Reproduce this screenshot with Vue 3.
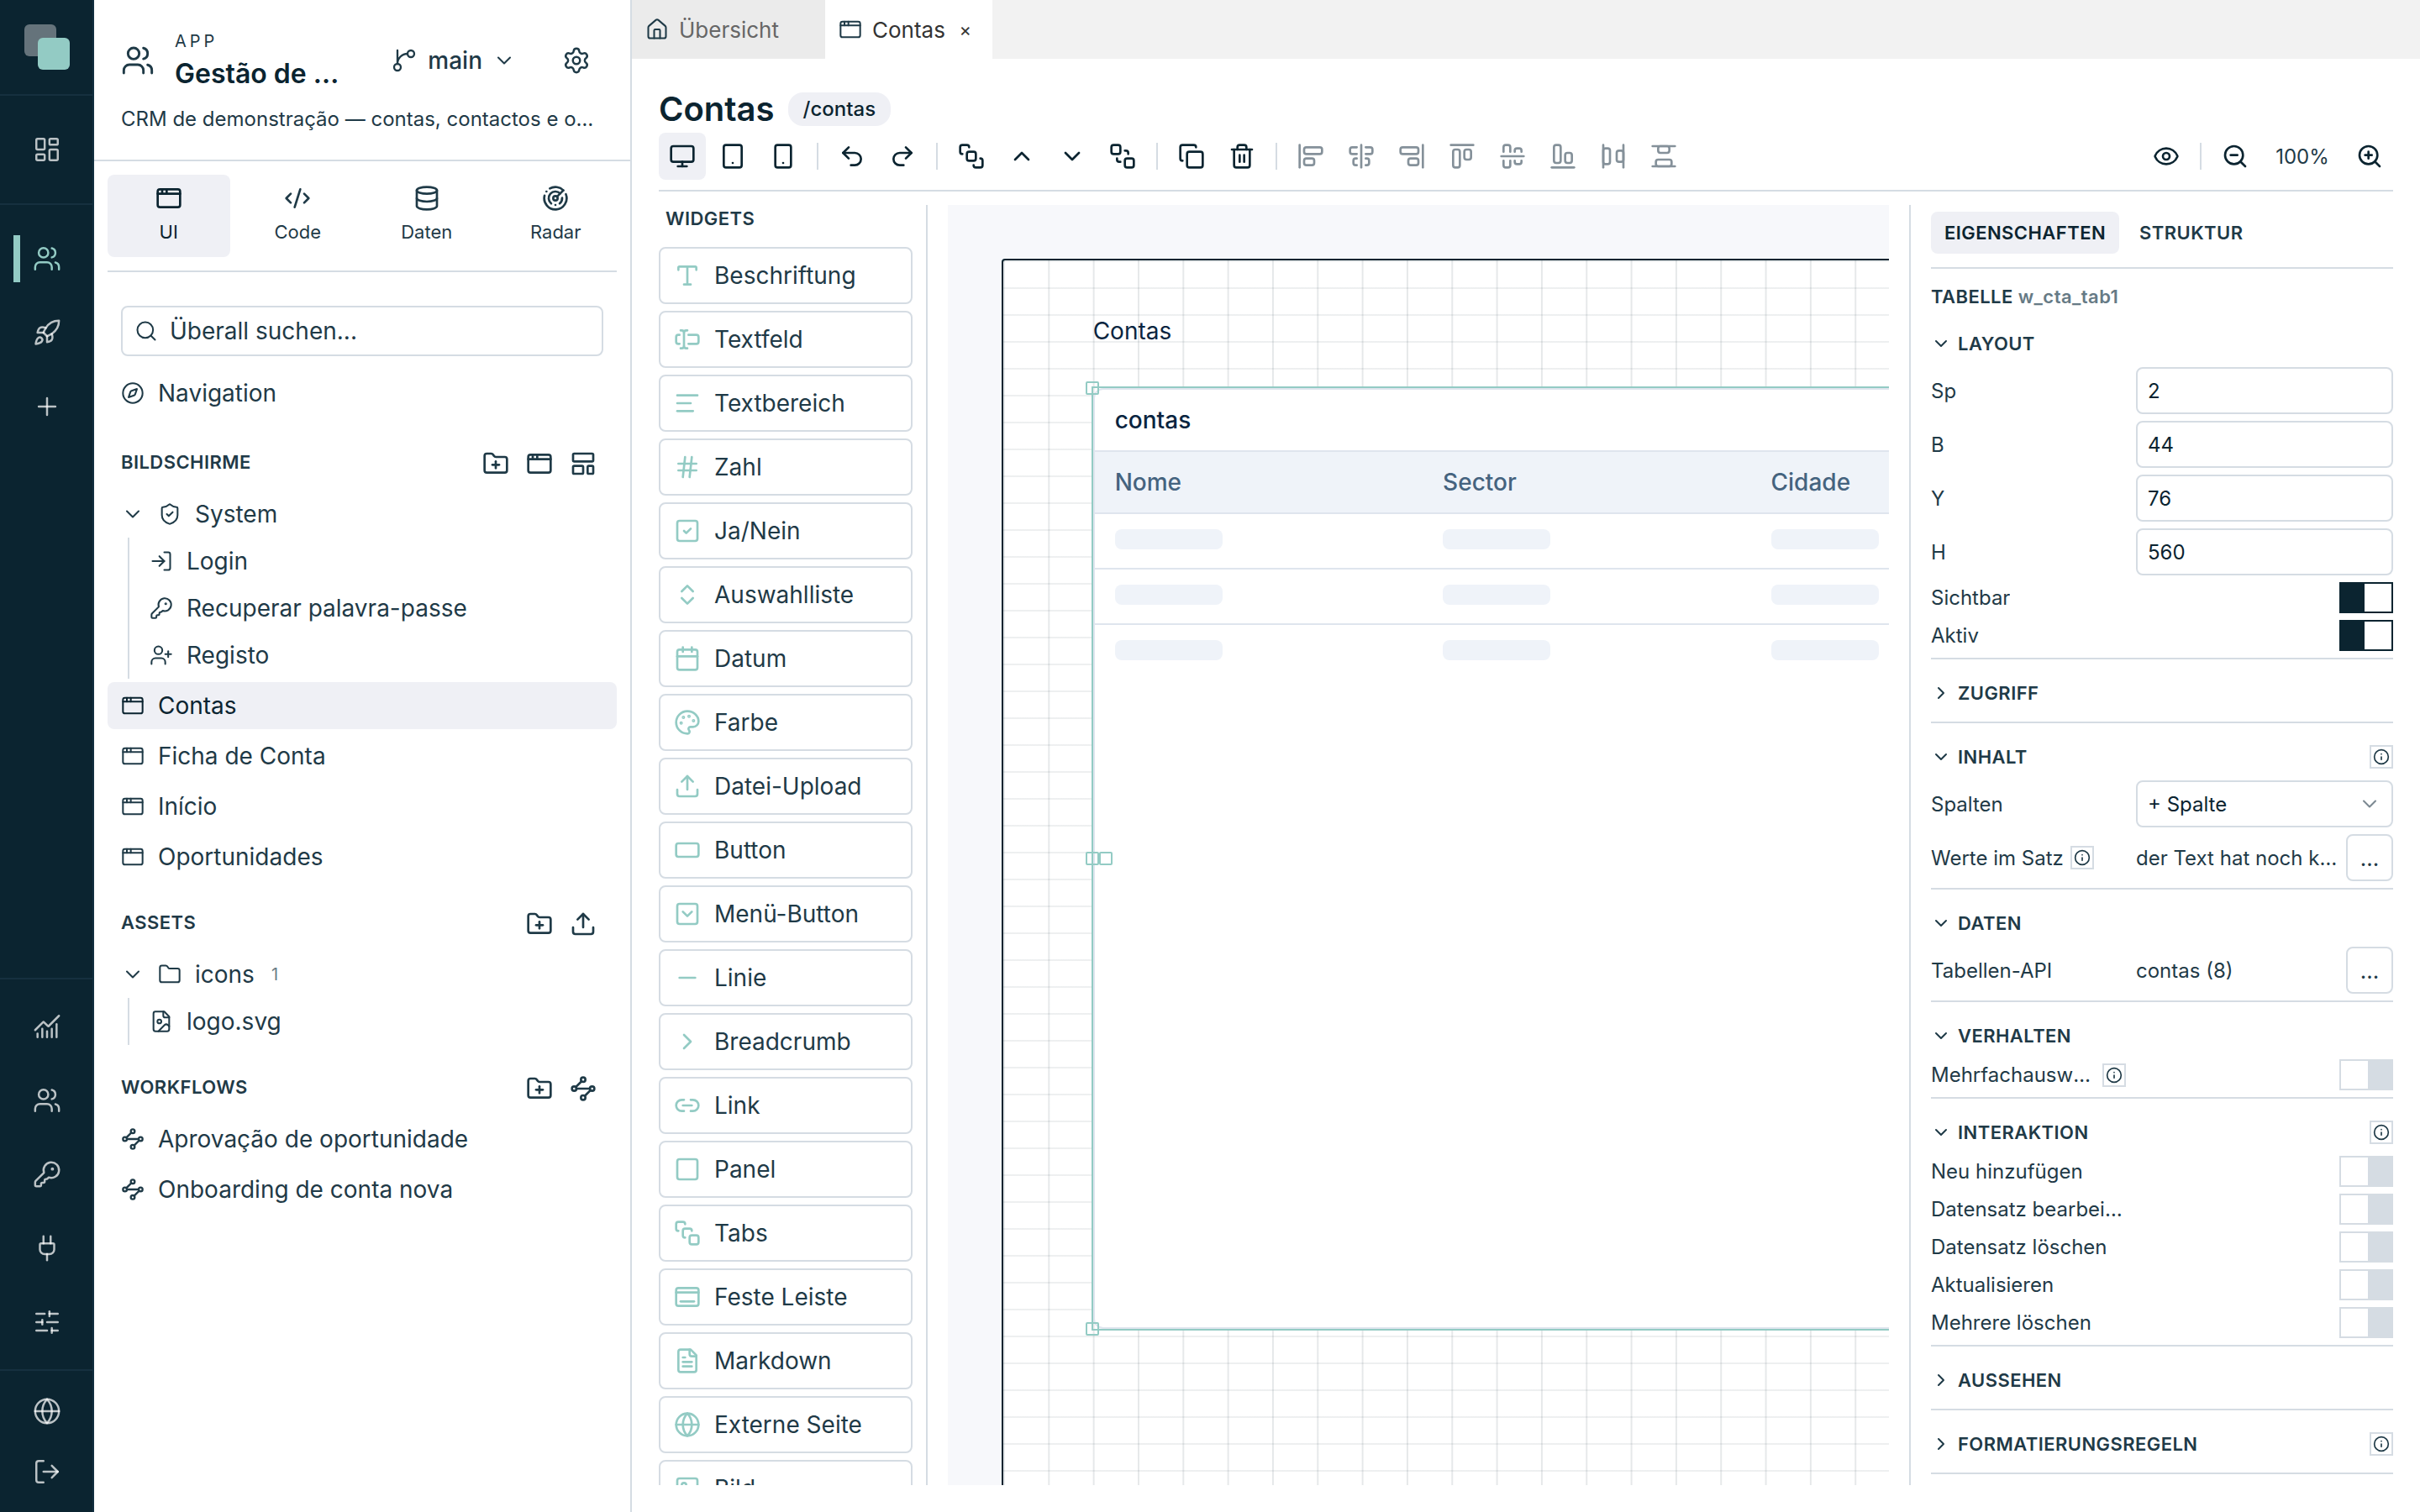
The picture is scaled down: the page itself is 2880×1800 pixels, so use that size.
<script setup>
import { h, ref } from 'vue';

const icons = {
  dashboard: '<rect width="7" height="9" x="3" y="3" rx="1"/><rect width="7" height="5" x="14" y="3" rx="1"/><rect width="7" height="9" x="14" y="12" rx="1"/><rect width="7" height="5" x="3" y="16" rx="1"/>',
  users: '<path d="M16 21v-2a4 4 0 0 0-4-4H6a4 4 0 0 0-4 4v2"/><circle cx="9" cy="7" r="4"/><path d="M22 21v-2a4 4 0 0 0-3-3.87"/><path d="M16 3.13a4 4 0 0 1 0 7.75"/>',
  rocket: '<path d="M4.5 16.5c-1.5 1.26-2 5-2 5s3.74-.5 5-2c.71-.84.7-2.13-.09-2.91a2.18 2.18 0 0 0-2.91-.09z"/><path d="m12 15-3-3a22 22 0 0 1 2-3.95A12.88 12.88 0 0 1 22 2c0 2.72-.78 7.5-6 11a22.35 22.35 0 0 1-4 2z"/><path d="M9 12H4s.55-3.03 2-4c1.62-1.08 5 0 5 0"/><path d="M12 15v5s3.03-.55 4-2c1.08-1.62 0-5 0-5"/>',
  plus: '<path d="M5 12h14"/><path d="M12 5v14"/>',
  chart: '<path d="M12 16v5"/><path d="M16 14v7"/><path d="M20 10v11"/><path d="m22 3-8.646 8.646a.5.5 0 0 1-.708 0L9.354 8.354a.5.5 0 0 0-.707 0L2 15"/><path d="M4 18v3"/><path d="M8 14v7"/>',
  key: '<path d="M2.586 17.414A2 2 0 0 0 2 18.828V21a1 1 0 0 0 1 1h3a1 1 0 0 0 1-1v-1a1 1 0 0 1 1-1h1a1 1 0 0 0 1-1v-1a1 1 0 0 1 1-1h.172a2 2 0 0 0 1.414-.586l.814-.814a6.5 6.5 0 1 0-4-4z"/><circle cx="16.5" cy="7.5" r=".5" fill="currentColor"/>',
  plug: '<path d="M12 22v-5"/><path d="M15 8V2"/><path d="M17 8a1 1 0 0 1 1 1v4a4 4 0 0 1-4 4h-4a4 4 0 0 1-4-4V9a1 1 0 0 1 1-1z"/><path d="M9 8V2"/>',
  sliders: '<path d="M10 5H3"/><path d="M12 19H3"/><path d="M14 3v4"/><path d="M16 17v4"/><path d="M21 12h-9"/><path d="M21 19h-5"/><path d="M21 5h-7"/><path d="M8 10v4"/><path d="M8 12H3"/>',
  globe: '<circle cx="12" cy="12" r="10"/><path d="M12 2a14.5 14.5 0 0 0 0 20 14.5 14.5 0 0 0 0-20"/><path d="M2 12h20"/>',
  logout: '<path d="m16 17 5-5-5-5"/><path d="M21 12H9"/><path d="M9 21H5a2 2 0 0 1-2-2V5a2 2 0 0 1 2-2h4"/>',
  branch: '<path d="M15 6a9 9 0 0 0-9 9V3"/><circle cx="18" cy="6" r="3"/><circle cx="6" cy="18" r="3"/>',
  down: '<path d="m6 9 6 6 6-6"/>',
  up: '<path d="m18 15-6-6-6 6"/>',
  right: '<path d="m9 18 6-6-6-6"/>',
  settings: '<path d="M9.671 4.136a2.34 2.34 0 0 1 4.659 0 2.34 2.34 0 0 0 3.319 1.915 2.34 2.34 0 0 1 2.33 4.033 2.34 2.34 0 0 0 0 3.831 2.34 2.34 0 0 1-2.33 4.033 2.34 2.34 0 0 0-3.319 1.915 2.34 2.34 0 0 1-4.659 0 2.34 2.34 0 0 0-3.32-1.915 2.34 2.34 0 0 1-2.33-4.033 2.34 2.34 0 0 0 0-3.831A2.34 2.34 0 0 1 6.35 6.051a2.34 2.34 0 0 0 3.319-1.915"/><circle cx="12" cy="12" r="3"/>',
  window: '<rect x="2" y="4" width="20" height="16" rx="2"/><path d="M10 4v4"/><path d="M2 8h20"/><path d="M6 4v4"/>',
  code: '<path d="m18 16 4-4-4-4"/><path d="m6 8-4 4 4 4"/><path d="m14.5 4-5 16"/>',
  database: '<ellipse cx="12" cy="5" rx="9" ry="3"/><path d="M3 5V19A9 3 0 0 0 21 19V5"/><path d="M3 12A9 3 0 0 0 21 12"/>',
  radar: '<path d="M19.07 4.93A10 10 0 0 0 6.99 3.34"/><path d="M4 6h.01"/><path d="M2.29 9.62A10 10 0 1 0 21.31 8.35"/><path d="M16.24 7.76A6 6 0 1 0 8.23 16.67"/><path d="M12 18h.01"/><path d="M17.99 11.66A6 6 0 0 1 15.77 16.67"/><circle cx="12" cy="12" r="2"/><path d="m13.41 10.59 5.66-5.66"/>',
  search: '<circle cx="11" cy="11" r="8"/><path d="m21 21-4.34-4.34"/>',
  compass: '<circle cx="12" cy="12" r="10"/><path d="m16.24 7.76-1.804 5.411a2 2 0 0 1-1.265 1.265L7.76 16.24l1.804-5.411a2 2 0 0 1 1.265-1.265z"/>',
  folderPlus: '<path d="M12 10v6"/><path d="M9 13h6"/><path d="M20 20a2 2 0 0 0 2-2V8a2 2 0 0 0-2-2h-7.9a2 2 0 0 1-1.69-.9L9.6 3.9A2 2 0 0 0 7.93 3H4a2 2 0 0 0-2 2v13a2 2 0 0 0 2 2Z"/>',
  folder: '<path d="M20 20a2 2 0 0 0 2-2V8a2 2 0 0 0-2-2h-7.9a2 2 0 0 1-1.69-.9L9.6 3.9A2 2 0 0 0 7.93 3H4a2 2 0 0 0-2 2v13a2 2 0 0 0 2 2Z"/>',
  template: '<rect width="18" height="7" x="3" y="3" rx="1"/><rect width="9" height="7" x="3" y="14" rx="1"/><rect width="5" height="7" x="16" y="14" rx="1"/>',
  shield: '<path d="M20 13c0 5-3.5 7.5-7.66 8.95a1 1 0 0 1-.67-.01C7.5 20.5 4 18 4 13V6a1 1 0 0 1 1-1c2 0 4.5-1.2 6.24-2.72a1.17 1.17 0 0 1 1.52 0C14.51 3.81 17 5 19 5a1 1 0 0 1 1 1z"/><path d="m9 12 2 2 4-4"/>',
  login: '<path d="m10 17 5-5-5-5"/><path d="M15 12H3"/><path d="M15 3h4a2 2 0 0 1 2 2v14a2 2 0 0 1-2 2h-4"/>',
  userPlus: '<path d="M16 21v-2a4 4 0 0 0-4-4H6a4 4 0 0 0-4 4v2"/><circle cx="9" cy="7" r="4"/><path d="M19 8v6"/><path d="M22 11h-6"/>',
  fileImage: '<path d="M15 2H6a2 2 0 0 0-2 2v16a2 2 0 0 0 2 2h12a2 2 0 0 0 2-2V7Z"/><path d="M14 2v4a2 2 0 0 0 2 2h4"/><circle cx="10" cy="12" r="2"/><path d="m20 17-1.296-1.296a2.41 2.41 0 0 0-3.408 0L9 22"/>',
  upload: '<path d="M12 3v12"/><path d="m17 8-5-5-5 5"/><path d="M21 15v4a2 2 0 0 1-2 2H5a2 2 0 0 1-2-2v-4"/>',
  workflow: '<path d="m10.586 5.414-5.172 5.172"/><path d="m18.586 13.414-5.172 5.172"/><path d="M6 12h12"/><circle cx="12" cy="20" r="2"/><circle cx="12" cy="4" r="2"/><circle cx="20" cy="12" r="2"/><circle cx="4" cy="12" r="2"/>',
  house: '<path d="M15 21v-8a1 1 0 0 0-1-1h-4a1 1 0 0 0-1 1v8"/><path d="M3 10a2 2 0 0 1 .709-1.528l7-6a2 2 0 0 1 2.582 0l7 6A2 2 0 0 1 21 10v9a2 2 0 0 1-2 2H5a2 2 0 0 1-2-2z"/>',
  monitor: '<rect width="20" height="14" x="2" y="3" rx="2"/><path d="M8 21h8"/><path d="M12 17v4"/>',
  tablet: '<rect width="16" height="20" x="4" y="2" rx="2"/><path d="M12 18h.01"/>',
  phone: '<rect width="14" height="20" x="5" y="2" rx="2"/><path d="M12 18h.01"/>',
  undo: '<path d="M9 14 4 9l5-5"/><path d="M4 9h10.5a5.5 5.5 0 0 1 5.5 5.5 5.5 5.5 0 0 1-5.5 5.5H11"/>',
  redo: '<path d="m15 14 5-5-5-5"/><path d="M20 9H9.5A5.5 5.5 0 0 0 4 14.5 5.5 5.5 0 0 0 9.5 20H13"/>',
  front: '<rect x="8" y="8" width="8" height="8" rx="2"/><path d="M4 10a2 2 0 0 1-2-2V4a2 2 0 0 1 2-2h4a2 2 0 0 1 2 2"/><path d="M14 20a2 2 0 0 0 2 2h4a2 2 0 0 0 2-2v-4a2 2 0 0 0-2-2"/>',
  back: '<rect x="14" y="14" width="8" height="8" rx="2"/><rect x="2" y="2" width="8" height="8" rx="2"/><path d="M7 14v1a2 2 0 0 0 2 2h1"/><path d="M14 7h1a2 2 0 0 1 2 2v1"/>',
  copy: '<rect width="14" height="14" x="8" y="8" rx="2"/><path d="M4 16c-1.1 0-2-.9-2-2V4c0-1.1.9-2 2-2h10c1.1 0 2 .9 2 2"/>',
  trash: '<path d="M3 6h18"/><path d="M19 6v14a2 2 0 0 1-2 2H7a2 2 0 0 1-2-2V6"/><path d="M8 6V4a2 2 0 0 1 2-2h4a2 2 0 0 1 2 2v2"/><path d="M10 11v6"/><path d="M14 11v6"/>',
  alignLeft: '<rect width="9" height="6" x="6" y="14" rx="2"/><rect width="16" height="6" x="6" y="4" rx="2"/><path d="M2 2v20"/>',
  alignCenter: '<path d="M12 2v20"/><path d="M8 10H4a2 2 0 0 1-2-2V6c0-1.1.9-2 2-2h4"/><path d="M16 10h4a2 2 0 0 0 2-2V6a2 2 0 0 0-2-2h-4"/><path d="M8 20H7a2 2 0 0 1-2-2v-2c0-1.1.9-2 2-2h1"/><path d="M16 14h1a2 2 0 0 1 2 2v2a2 2 0 0 1-2 2h-1"/>',
  alignRight: '<rect width="16" height="6" x="2" y="4" rx="2"/><rect width="9" height="6" x="9" y="14" rx="2"/><path d="M22 22V2"/>',
  alignTop: '<rect width="6" height="16" x="4" y="6" rx="2"/><rect width="6" height="9" x="14" y="6" rx="2"/><path d="M22 2H2"/>',
  alignMiddle: '<path d="M2 12h20"/><path d="M10 16v4a2 2 0 0 1-2 2H6a2 2 0 0 1-2-2v-4"/><path d="M10 8V4a2 2 0 0 0-2-2H6a2 2 0 0 0-2 2v4"/><path d="M20 16v1a2 2 0 0 1-2 2h-2a2 2 0 0 1-2-2v-1"/><path d="M14 8V7c0-1.1.9-2 2-2h2a2 2 0 0 1 2 2v1"/>',
  alignBottom: '<rect width="6" height="16" x="4" y="2" rx="2"/><rect width="6" height="9" x="14" y="9" rx="2"/><path d="M22 22H2"/>',
  spaceX: '<rect width="6" height="14" x="3" y="5" rx="2"/><rect width="6" height="10" x="15" y="7" rx="2"/><path d="M3 2v20"/><path d="M21 2v20"/>',
  spaceY: '<rect width="14" height="6" x="5" y="15" rx="2"/><rect width="10" height="6" x="7" y="3" rx="2"/><path d="M2 21h20"/><path d="M2 3h20"/>',
  eye: '<path d="M2.062 12.348a1 1 0 0 1 0-.696 10.75 10.75 0 0 1 19.876 0 1 1 0 0 1 0 .696 10.75 10.75 0 0 1-19.876 0"/><circle cx="12" cy="12" r="3"/>',
  zoomOut: '<circle cx="11" cy="11" r="8"/><path d="m21 21-4.35-4.35"/><path d="M8 11h6"/>',
  zoomIn: '<circle cx="11" cy="11" r="8"/><path d="m21 21-4.35-4.35"/><path d="M11 8v6"/><path d="M8 11h6"/>',
  info: '<circle cx="12" cy="12" r="10"/><path d="M12 16v-4"/><path d="M12 8h.01"/>',
  type: '<path d="M12 4v16"/><path d="M4 7V5a1 1 0 0 1 1-1h14a1 1 0 0 1 1 1v2"/><path d="M9 20h6"/>',
  textInput: '<path d="M12 20h-1a2 2 0 0 1-2-2 2 2 0 0 1-2 2H6"/><path d="M13 8h7a2 2 0 0 1 2 2v4a2 2 0 0 1-2 2h-7"/><path d="M5 16H4a2 2 0 0 1-2-2v-4a2 2 0 0 1 2-2h1"/><path d="M6 4h1a2 2 0 0 1 2 2 2 2 0 0 1 2-2h1"/><path d="M9 6v12"/>',
  text: '<path d="M21 5H3"/><path d="M15 12H3"/><path d="M17 19H3"/>',
  hash: '<path d="M4 9h16"/><path d="M4 15h16"/><path d="M10 3 8 21"/><path d="m16 3-2 18"/>',
  check: '<rect width="18" height="18" x="3" y="3" rx="2"/><path d="m9 12 2 2 4-4"/>',
  upDown: '<path d="m7 15 5 5 5-5"/><path d="m7 9 5-5 5 5"/>',
  calendar: '<path d="M8 2v4"/><path d="M16 2v4"/><rect width="18" height="18" x="3" y="4" rx="2"/><path d="M3 10h18"/>',
  palette: '<path d="M12 22a1 1 0 0 1 0-20 10 9 0 0 1 10 9 5 5 0 0 1-5 5h-2.25a1.75 1.75 0 0 0-1.4 2.8l.3.4a1.75 1.75 0 0 1-1.4 2.8z"/><circle cx="13.5" cy="6.5" r=".5" fill="currentColor"/><circle cx="17.5" cy="10.5" r=".5" fill="currentColor"/><circle cx="6.5" cy="12.5" r=".5" fill="currentColor"/><circle cx="8.5" cy="7.5" r=".5" fill="currentColor"/>',
  rectangle: '<rect width="20" height="12" x="2" y="6" rx="2"/>',
  squareDown: '<rect width="18" height="18" x="3" y="3" rx="2"/><path d="m16 10-4 4-4-4"/>',
  minus: '<path d="M5 12h14"/>',
  link: '<path d="M9 17H7A5 5 0 0 1 7 7h2"/><path d="M15 7h2a5 5 0 1 1 0 10h-2"/><path d="M8 12h8"/>',
  square: '<rect width="18" height="18" x="3" y="3" rx="2"/>',
  stack: '<path d="M4 10c-1.1 0-2-.9-2-2V4c0-1.1.9-2 2-2h4c1.1 0 2 .9 2 2"/><path d="M10 16c-1.1 0-2-.9-2-2v-4c0-1.1.9-2 2-2h4c1.1 0 2 .9 2 2"/><rect width="8" height="8" x="14" y="14" rx="2"/>',
  dock: '<path d="M2 8h20"/><rect width="20" height="16" x="2" y="4" rx="2"/><path d="M6 16h12"/>',
  fileText: '<path d="M15 2H6a2 2 0 0 0-2 2v16a2 2 0 0 0 2 2h12a2 2 0 0 0 2-2V7Z"/><path d="M14 2v4a2 2 0 0 0 2 2h4"/><path d="M10 9H8"/><path d="M16 13H8"/><path d="M16 17H8"/>',
  image: '<rect width="18" height="18" x="3" y="3" rx="2"/><circle cx="9" cy="9" r="2"/><path d="m21 15-3.086-3.086a2 2 0 0 0-2.828 0L6 21"/>',
};

const Icon = (props) => h('svg', {
  viewBox: '0 0 24 24',
  width: props.size || 28,
  height: props.size || 28,
  fill: 'none',
  stroke: 'currentColor',
  'stroke-width': props.stroke || 1.75,
  'stroke-linecap': 'round',
  'stroke-linejoin': 'round',
  'aria-hidden': 'true',
  innerHTML: icons[props.name],
});
Icon.props = ['name', 'size', 'stroke'];

const railBottom = ['chart', 'users', 'key', 'plug', 'sliders'];

const modes = [
  { icon: 'window', label: 'UI' },
  { icon: 'code', label: 'Code' },
  { icon: 'database', label: 'Daten' },
  { icon: 'radar', label: 'Radar' },
];

const systemScreens = [
  { icon: 'login', label: 'Login' },
  { icon: 'key', label: 'Recuperar palavra-passe' },
  { icon: 'userPlus', label: 'Registo' },
];
const screens = ['Contas', 'Ficha de Conta', 'Início', 'Oportunidades'];
const workflows = ['Aprovação de oportunidade', 'Onboarding de conta nova'];

const toolGroups = [
  ['monitor', 'tablet', 'phone'],
  ['undo', 'redo'],
  ['front', 'up', 'down', 'back'],
  ['copy', 'trash'],
  ['alignLeft', 'alignCenter', 'alignRight', 'alignTop', 'alignMiddle', 'alignBottom', 'spaceX', 'spaceY'],
];

const widgets = [
  { icon: 'type', label: 'Beschriftung' },
  { icon: 'textInput', label: 'Textfeld' },
  { icon: 'text', label: 'Textbereich' },
  { icon: 'hash', label: 'Zahl' },
  { icon: 'check', label: 'Ja/Nein' },
  { icon: 'upDown', label: 'Auswahlliste' },
  { icon: 'calendar', label: 'Datum' },
  { icon: 'palette', label: 'Farbe' },
  { icon: 'upload', label: 'Datei-Upload' },
  { icon: 'rectangle', label: 'Button' },
  { icon: 'squareDown', label: 'Menü-Button' },
  { icon: 'minus', label: 'Linie' },
  { icon: 'right', label: 'Breadcrumb' },
  { icon: 'link', label: 'Link' },
  { icon: 'square', label: 'Panel' },
  { icon: 'stack', label: 'Tabs' },
  { icon: 'dock', label: 'Feste Leiste' },
  { icon: 'fileText', label: 'Markdown' },
  { icon: 'globe', label: 'Externe Seite' },
  { icon: 'image', label: 'Bild' },
];

const columns = ['Nome', 'Sector', 'Cidade'];

// the board is divided into 48 columns
const place = (col, span, y, height) => ({
  left: `${(col / 48) * 100}%`,
  width: `${(span / 48) * 100}%`,
  top: `${y}px`,
  height: `${height}px`,
});

const layout = ref([
  { id: 'sp', label: 'Sp', value: '2' },
  { id: 'b', label: 'B', value: '44' },
  { id: 'y', label: 'Y', value: '76' },
  { id: 'h', label: 'H', value: '560' },
]);
const flags = ref([
  { id: 'visible', label: 'Sichtbar', value: true },
  { id: 'active', label: 'Aktiv', value: true },
]);
const multiple = ref(false);
const actions = ref([
  { id: 'add', label: 'Neu hinzufügen', value: false },
  { id: 'edit', label: 'Datensatz bearbeiten', value: false },
  { id: 'delete', label: 'Datensatz löschen', value: false },
  { id: 'refresh', label: 'Aktualisieren', value: false },
  { id: 'bulk', label: 'Mehrere löschen', value: false },
]);
</script>

<template>
  <div class="app">
    <nav class="rail">
      <div class="rail-logo">
        <svg width="56" height="56" viewBox="0 0 56 56" aria-hidden="true">
          <rect x="1" y="1" width="38" height="38" rx="6" fill="#65737b" />
          <rect x="17" y="17" width="38" height="38" rx="6" fill="#93cbc4" />
        </svg>
      </div>
      <div class="rail-group">
        <button class="rail-button"><Icon name="dashboard" size="34" /></button>
      </div>
      <div class="rail-group rail-apps">
        <button class="rail-button active"><Icon name="users" size="34" /></button>
        <button class="rail-button"><Icon name="rocket" size="34" /></button>
        <button class="rail-button"><Icon name="plus" size="34" /></button>
      </div>
      <div class="rail-group rail-admin">
        <button v-for="icon in railBottom" :key="icon" class="rail-button"><Icon :name="icon" size="34" /></button>
      </div>
      <div class="rail-group rail-user">
        <button class="rail-button"><Icon name="globe" size="34" /></button>
        <button class="rail-button"><Icon name="logout" size="34" /></button>
      </div>
    </nav>

    <aside class="sidebar">
      <header class="app-header">
        <div class="app-row">
          <Icon name="users" size="40" />
          <div class="app-name">
            <span class="app-kicker">APP</span>
            <strong>Gestão de …</strong>
          </div>
          <button class="branch">
            <Icon name="branch" size="32" />
            <span>main</span>
            <Icon name="down" />
          </button>
          <button class="gear"><Icon name="settings" size="34" /></button>
        </div>
        <p class="app-text">CRM de demonstração — contas, contactos e o…</p>
      </header>

      <div class="modes">
        <button v-for="(mode, i) in modes" :key="mode.label" class="mode" :class="{ active: i === 0 }">
          <Icon :name="mode.icon" size="32" stroke="2" />
          <span>{{ mode.label }}</span>
        </button>
      </div>

      <div class="tree">
        <label class="search">
          <Icon name="search" />
          <input type="text" placeholder="Überall suchen..." aria-label="Überall suchen..." />
        </label>
        <a href="#" class="row navigation"><Icon name="compass" />Navigation</a>

        <div class="tree-head">
          <h2>BILDSCHIRME</h2>
          <button><Icon name="folderPlus" size="32" stroke="2" /></button>
          <button><Icon name="window" size="32" stroke="2" /></button>
          <button><Icon name="template" size="32" stroke="2" /></button>
        </div>
        <a href="#" class="row folder"><Icon name="down" /><Icon name="shield" />System</a>
        <div class="children">
          <a v-for="item in systemScreens" :key="item.label" href="#" class="row">
            <Icon :name="item.icon" />{{ item.label }}
          </a>
        </div>
        <a v-for="(name, i) in screens" :key="name" href="#" class="row" :class="{ active: i === 0 }">
          <Icon name="window" />{{ name }}
        </a>

        <div class="tree-head">
          <h2>ASSETS</h2>
          <button><Icon name="folderPlus" size="32" stroke="2" /></button>
          <button><Icon name="upload" size="32" stroke="2" /></button>
        </div>
        <a href="#" class="row folder"><Icon name="down" /><Icon name="folder" />icons<small>1</small></a>
        <div class="children">
          <a href="#" class="row"><Icon name="fileImage" />logo.svg</a>
        </div>

        <div class="tree-head">
          <h2>WORKFLOWS</h2>
          <button><Icon name="folderPlus" size="32" stroke="2" /></button>
          <button><Icon name="workflow" size="32" stroke="2" /></button>
        </div>
        <a v-for="name in workflows" :key="name" href="#" class="row"><Icon name="workflow" stroke="2" />{{ name }}</a>
      </div>
    </aside>

    <main class="main">
      <div class="tabs">
        <div class="tab closed"><Icon name="house" /><span>Übersicht</span></div>
        <div class="tab open"><Icon name="window" /><span>Contas</span><button>×</button></div>
      </div>

      <div class="editor">
        <div class="title">
          <h1>Contas</h1>
          <span class="path">/contas</span>
        </div>

        <div class="toolbar">
          <template v-for="(group, g) in toolGroups" :key="g">
            <span v-if="g" class="sep"></span>
            <button
              v-for="(tool, i) in group"
              :key="tool"
              class="tool"
              :class="{ active: !g && !i }"
              :disabled="g === 4"
            >
              <Icon :name="tool" size="32" stroke="2" />
            </button>
          </template>
          <span class="spacer"></span>
          <button class="tool"><Icon name="eye" size="32" stroke="2" /></button>
          <span class="sep"></span>
          <button class="tool"><Icon name="zoomOut" size="32" stroke="2" /></button>
          <span class="zoom">100%</span>
          <button class="tool"><Icon name="zoomIn" size="32" stroke="2" /></button>
        </div>

        <div class="workspace">
          <section class="widgets">
            <h2>WIDGETS</h2>
            <button v-for="widget in widgets" :key="widget.label" class="widget">
              <Icon :name="widget.icon" size="32" stroke="2" />{{ widget.label }}
            </button>
          </section>

          <section class="canvas">
            <div class="board">
              <div class="board-label" :style="place(2, 20, 64, 40)">Contas</div>
              <div class="board-item" :style="place(2, 44, 152, 1120)">
                <div class="board-table">
                  <div class="caption">contas</div>
                  <table>
                    <thead>
                      <tr><th v-for="column in columns" :key="column">{{ column }}</th></tr>
                    </thead>
                    <tbody>
                      <tr v-for="n in 3" :key="n">
                        <td v-for="column in columns" :key="column"><div class="skeleton"></div></td>
                      </tr>
                    </tbody>
                  </table>
                </div>
                <span class="handle top"></span>
                <span class="handle middle"></span>
                <span class="handle middle inner"></span>
                <span class="handle bottom"></span>
              </div>
            </div>
          </section>

          <section class="props">
            <div class="prop-tabs">
              <button class="active">EIGENSCHAFTEN</button>
              <button>STRUKTUR</button>
            </div>
            <div class="prop-name">TABELLE <span>w_cta_tab1</span></div>

            <div class="group">
              <h3><Icon name="down" size="24" stroke="2" />LAYOUT</h3>
              <div v-for="field in layout" :key="field.id" class="prop">
                <label :for="field.id"><span>{{ field.label }}</span></label>
                <input :id="field.id" v-model="field.value" type="text" />
              </div>
              <div v-for="flag in flags" :key="flag.id" class="prop">
                <label :for="flag.id"><span>{{ flag.label }}</span></label>
                <input :id="flag.id" v-model="flag.value" type="checkbox" class="switch" />
              </div>
            </div>

            <div class="group collapsed">
              <h3><Icon name="right" size="24" stroke="2" />ZUGRIFF</h3>
            </div>

            <div class="group">
              <h3><Icon name="down" size="24" stroke="2" />INHALT<button class="info"><Icon name="info" size="20" stroke="2" /></button></h3>
              <div class="prop">
                <label for="columns"><span>Spalten</span></label>
                <div class="select">
                  <select id="columns"><option>+ Spalte</option></select>
                  <Icon name="down" />
                </div>
              </div>
              <div class="prop">
                <div class="prop-label"><span>Werte im Satz</span><button class="info"><Icon name="info" size="20" stroke="2" /></button></div>
                <div class="value"><span>der Text hat noch k…</span><button class="more">...</button></div>
              </div>
            </div>

            <div class="group">
              <h3><Icon name="down" size="24" stroke="2" />DATEN</h3>
              <div class="prop">
                <div class="prop-label"><span>Tabellen-API</span></div>
                <div class="value"><span>contas (8)</span><button class="more">...</button></div>
              </div>
            </div>

            <div class="group">
              <h3><Icon name="down" size="24" stroke="2" />VERHALTEN</h3>
              <div class="prop">
                <div class="prop-label">
                  <label for="multiple"><span>Mehrfachauswahl</span></label>
                  <button class="info"><Icon name="info" size="20" stroke="2" /></button>
                </div>
                <input id="multiple" v-model="multiple" type="checkbox" class="switch" />
              </div>
            </div>

            <div class="group">
              <h3><Icon name="down" size="24" stroke="2" />INTERAKTION<button class="info"><Icon name="info" size="20" stroke="2" /></button></h3>
              <div v-for="action in actions" :key="action.id" class="prop">
                <label :for="action.id"><span>{{ action.label }}</span></label>
                <input :id="action.id" v-model="action.value" type="checkbox" class="switch" />
              </div>
            </div>

            <div class="group collapsed">
              <h3><Icon name="right" size="24" stroke="2" />AUSSEHEN</h3>
            </div>

            <div class="group collapsed">
              <h3><Icon name="right" size="24" stroke="2" />FORMATIERUNGSREGELN<button class="info"><Icon name="info" size="20" stroke="2" /></button></h3>
            </div>
          </section>
        </div>
      </div>
    </main>
  </div>
</template>

<style>
body {
  overflow: hidden;
  background: #fff;
}
</style>

<style scoped>
* {
  box-sizing: border-box;
}

.app {
  --dark: #0b2430;
  --text: #1f3a47;
  --line: #d5dce3;
  --soft: #eff0f5;
  --teal: #93cbc4;

  display: flex;
  height: 100vh;
  font-family: Inter, "Liberation Sans", sans-serif;
  font-size: 28px;
  color: var(--text);
}

h1, h2, h3, p {
  margin: 0;
}

button, input, select {
  margin: 0;
  padding: 0;
  border: 0;
  background: none;
  font: inherit;
  letter-spacing: inherit;
  color: inherit;
}

a {
  color: inherit;
  text-decoration: none;
}

svg {
  display: block;
  flex: none;
}

/* rail */
.rail {
  display: flex;
  flex-direction: column;
  flex: none;
  width: 112px;
  background: var(--dark);
  border-right: 2px solid #122f3f;
  color: rgba(255, 255, 255, 0.72);
}

.rail-logo {
  padding: 28px;
}

.rail-group {
  display: flex;
  flex-direction: column;
  gap: 32px;
  padding: 36px 0;
  border-top: 2px solid #16303f;
}

.rail-apps {
  flex: 1;
}

.rail-admin {
  padding: 28px 0;
}

.rail-user {
  gap: 16px;
  padding: 20px 0;
}

.rail-button {
  display: flex;
  align-items: center;
  justify-content: center;
  width: 112px;
  height: 56px;
  position: relative;
}

.rail-button.active {
  color: var(--teal);
}

.rail-button.active::before {
  content: "";
  position: absolute;
  left: 16px;
  top: 0;
  width: 8px;
  height: 56px;
  background: var(--teal);
}

/* sidebar */
.sidebar {
  flex: none;
  width: 640px;
  border-right: 2px solid var(--line);
}

.app-header {
  padding: 32px 32px 30px;
  border-bottom: 2px solid var(--line);
}

.app-row {
  display: flex;
  align-items: center;
  height: 80px;
}

.app-name {
  display: flex;
  flex: 1;
  flex-direction: column;
  min-width: 0;
  margin-left: 24px;
}

.app-kicker {
  font-size: 20px;
  line-height: 32px;
  letter-spacing: 4px;
}

.app-name strong {
  font-size: 32px;
  line-height: 46px;
  font-weight: 600;
  color: var(--dark);
  white-space: nowrap;
}

.branch {
  display: flex;
  align-items: center;
  gap: 12px;
  height: 56px;
  margin-right: 40px;
  font-weight: 500;
}

.gear {
  display: flex;
  align-items: center;
  justify-content: center;
  width: 64px;
  height: 56px;
}

.app-text {
  margin-top: 12px;
  font-size: 24px;
  line-height: 36px;
  white-space: nowrap;
}

.modes {
  display: grid;
  grid-template-columns: repeat(4, 1fr);
  gap: 8px;
  margin: 0 16px;
  padding: 16px 0;
  border-bottom: 2px solid var(--line);
}

.mode {
  display: flex;
  flex-direction: column;
  align-items: center;
  gap: 10px;
  padding: 12px 0 16px;
  border-radius: 8px;
  font-size: 22px;
  line-height: 28px;
}

.mode.active {
  background: var(--soft);
  color: var(--dark);
}

.tree {
  display: flex;
  flex-direction: column;
  gap: 4px;
  padding: 40px 16px 0;
}

.search {
  display: flex;
  align-items: center;
  gap: 14px;
  height: 60px;
  margin: 0 16px 12px;
  padding: 0 14px;
  border: 2px solid var(--line);
  border-radius: 8px;
}

.search input {
  flex: 1;
  min-width: 0;
  outline: none;
}

.search input::placeholder {
  color: var(--text);
  opacity: 1;
}

.row {
  display: flex;
  align-items: center;
  gap: 16px;
  height: 56px;
  padding: 0 16px;
  border-radius: 8px;
  white-space: nowrap;
}

.row.active {
  background: var(--soft);
  color: var(--dark);
}

.row small {
  font-size: 20px;
  color: #6b7c86;
  margin-left: 4px;
}

.row.navigation {
  margin-bottom: 4px;
}

.row.folder {
  margin-bottom: -4px;
}

.children {
  margin-left: 24px;
  padding-left: 24px;
  border-left: 2px solid var(--line);
}

.children .row {
  padding: 0;
}

.tree-head {
  display: flex;
  align-items: center;
  gap: 12px;
  height: 40px;
  margin: 28px 20px 8px 16px;
}

.tree-head h2 {
  flex: 1;
  padding-bottom: 4px;
}

.tree-head button {
  display: flex;
  align-items: center;
  justify-content: center;
  width: 40px;
  height: 40px;
}

.tree-head h2,
.widgets h2,
.prop-name,
.prop-tabs,
.group h3 {
  font-size: 22px;
  font-weight: 600;
  letter-spacing: 0.02em;
}

/* main */
.main {
  display: flex;
  flex: 1;
  flex-direction: column;
  min-width: 0;
}

.tabs {
  display: flex;
  flex: none;
  height: 70px;
  background: #f2f2f2;
}

.tab {
  display: flex;
  align-items: center;
  gap: 12px;
  padding: 0 20px 0 16px;
  font-size: 26px;
}

.tab svg {
  color: var(--text);
}

.tab.closed {
  padding-right: 55px;
  background: #ebebeb;
  color: #666;
}

.tab.open {
  background: #fff;
  color: #333;
}

.tab button {
  width: 24px;
  font-size: 22px;
}

.editor {
  display: flex;
  flex: 1;
  flex-direction: column;
  min-height: 0;
  padding: 40px 32px 32px;
}

.title {
  display: flex;
  align-items: center;
  gap: 16px;
}

.title h1 {
  font-size: 40px;
  line-height: 40px;
  font-weight: 600;
  color: var(--dark);
}

.path {
  padding: 0 18px;
  border-radius: 18px;
  background: var(--soft);
  color: var(--dark);
  font-size: 24px;
  line-height: 40px;
  font-weight: 500;
}

.toolbar {
  display: flex;
  align-items: center;
  gap: 4px;
  margin-top: 8px;
  padding-bottom: 12px;
  border-bottom: 2px solid var(--line);
}

.tool {
  display: flex;
  align-items: center;
  justify-content: center;
  width: 56px;
  height: 56px;
  border-radius: 8px;
  color: var(--dark);
}

.tool.active {
  background: var(--soft);
}

.tool:disabled {
  color: #85919a;
}

.sep {
  width: 2px;
  height: 32px;
  margin: 0 8px;
  background: var(--line);
}

.spacer {
  flex: 1;
}

.zoom {
  width: 96px;
  font-size: 24px;
  text-align: center;
}

.workspace {
  display: flex;
  flex: 1;
  gap: 24px;
  min-height: 0;
  margin-top: 16px;
}

.widgets {
  display: flex;
  flex: none;
  flex-direction: column;
  gap: 8px;
  width: 320px;
  padding-right: 16px;
  border-right: 2px solid var(--line);
  overflow: hidden;
}

.widgets h2 {
  flex: none;
  padding-left: 8px;
  margin-bottom: 10px;
  line-height: 32px;
}

.widget {
  display: flex;
  flex: none;
  align-items: center;
  gap: 16px;
  height: 68px;
  padding: 0 16px;
  border: 2px solid var(--line);
  border-radius: 8px;
}

.widget svg {
  color: var(--teal);
}

/* canvas */
.canvas {
  flex: 1;
  min-width: 0;
  padding: 64px;
  background: #f7f8fb;
  overflow: hidden;
}

.board {
  position: relative;
  width: 2564px;
  height: 1800px;
  border: 2px solid var(--dark);
  border-radius: 4px;
  background-color: #fff;
  background-image:
    linear-gradient(to right, rgba(11, 36, 48, 0.1) 2px, transparent 2px),
    linear-gradient(to bottom, rgba(11, 36, 48, 0.07) 2px, transparent 2px);
  background-size: calc(100% / 48) 32px;
}

.board-label,
.board-item {
  position: absolute;
}

.board-label {
  line-height: 40px;
  color: #0a2540;
}

.board-item {
  outline: 2px solid var(--teal);
}

.board-table {
  height: 100%;
  border: 2px solid #dfe5ee;
  border-radius: 12px;
  background: #fff;
  overflow: hidden;
}

.caption {
  height: 74px;
  padding: 0 24px;
  border-bottom: 2px solid #dfe5ee;
  font-weight: 500;
  line-height: 72px;
  color: #0a2540;
}

.board-table table {
  width: 50%;
  table-layout: fixed;
  border-collapse: separate;
  border-spacing: 0;
}

.board-table th {
  height: 74px;
  padding: 0 24px;
  border-bottom: 2px solid #dfe5ee;
  background: #eff3f9;
  font-size: 28px;
  font-weight: 500;
  text-align: left;
  color: #45637f;
}

.board-table td {
  padding: 18px 24px 22px;
  border-bottom: 2px solid #dfe5ee;
}

.board-table tr:last-child td {
  border-bottom: 0;
}

.skeleton {
  width: 128px;
  height: 24px;
  border-radius: 8px;
  background: #eff3f9;
}

.handle {
  position: absolute;
  left: -9px;
  width: 16px;
  height: 16px;
  border: 2px solid var(--teal);
  border-radius: 2px;
}

.handle.top {
  top: -8px;
}

.handle.middle {
  top: calc(50% - 8px);
}

.handle.inner {
  left: 7px;
}

.handle.bottom {
  bottom: -8px;
}

/* properties */
.props {
  flex: none;
  width: 576px;
  padding: 8px 0 0 24px;
  border-left: 2px solid var(--line);
  font-size: 24px;
  overflow: hidden;
}

.prop-tabs {
  display: flex;
  gap: 8px;
  padding-bottom: 16px;
  border-bottom: 2px solid var(--line);
}

.prop-tabs button {
  height: 50px;
  padding: 0 16px;
  border-radius: 8px;
}

.prop-tabs .active {
  background: var(--soft);
  color: var(--dark);
}

.prop-name {
  margin-top: 17px;
  line-height: 32px;
}

.prop-name span {
  color: #667a85;
}

.group {
  display: flex;
  flex-direction: column;
  gap: 8px;
  padding: 26px 0 8px;
  border-bottom: 2px solid var(--line);
}

.group h3 {
  display: flex;
  align-items: center;
  gap: 8px;
  height: 28px;
  margin-bottom: 6px;
}

.group h3 .info {
  margin-left: auto;
}

.group.collapsed {
  padding-bottom: 14px;
}

.prop {
  display: grid;
  grid-template-columns: 232px 1fr;
  column-gap: 12px;
  align-items: center;
}

.prop label,
.prop-label {
  display: flex;
  align-items: center;
  gap: 8px;
  min-width: 0;
}

.prop label span,
.value span {
  overflow: hidden;
  text-overflow: ellipsis;
  white-space: nowrap;
}

.prop input[type="text"],
.prop select {
  width: 100%;
  height: 56px;
  padding: 0 12px;
  border: 2px solid var(--line);
  border-radius: 8px;
  background: #fff;
  color: var(--dark);
}

.select {
  position: relative;
}

.prop select {
  display: block;
  appearance: none;
}

.select svg {
  position: absolute;
  right: 14px;
  top: 14px;
  color: #7b8891;
  pointer-events: none;
}

.value {
  display: flex;
  align-items: center;
  gap: 8px;
  min-width: 0;
}

.value span {
  flex: 1;
}

.more {
  flex: none;
  width: 56px;
  height: 56px;
  border: 2px solid var(--line);
  border-radius: 8px;
  font-size: 26px;
}

.info {
  display: flex;
  flex: none;
  align-items: center;
  justify-content: center;
  width: 28px;
  height: 28px;
  border: 2px solid var(--line);
}

.switch {
  appearance: none;
  justify-self: end;
  width: 64px;
  height: 37px;
  border: 2px solid var(--line);
  background: var(--line);
}

.switch::before {
  content: "";
  display: block;
  width: 32px;
  height: 100%;
  background: #fff;
}

.switch:checked {
  border-color: var(--dark);
  background: var(--dark);
}

.switch:checked::before {
  margin-left: auto;
}
</style>
